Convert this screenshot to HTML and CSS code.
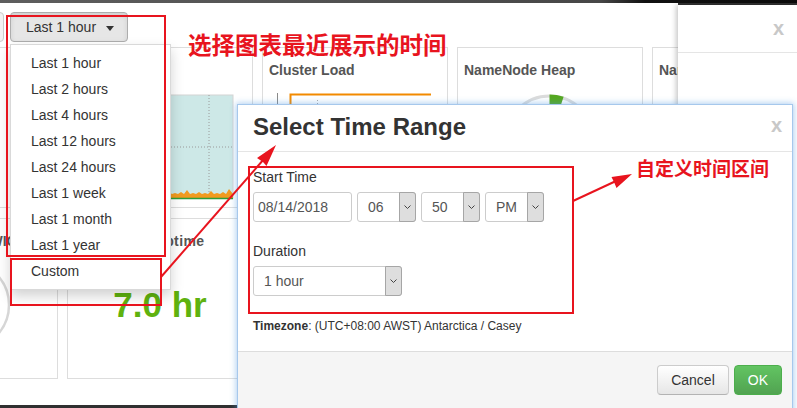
FILE: index.html
```html
<!DOCTYPE html>
<html>
<head>
<meta charset="utf-8">
<title>Select Time Range</title>
<link rel="stylesheet" href="styles.css">
</head>
<body>
<div class="topbar"></div>
<div class="page">
  <div class="toolbar">
    <button class="btn btn-ghost">Today</button>
    <div class="dropdown">
      <button class="btn btn-active">Last 1 hour<span class="caret"></span></button>
      <ul class="dropdown-menu">
        <li>Last 1 hour</li>
        <li>Last 2 hours</li>
        <li>Last 4 hours</li>
        <li>Last 12 hours</li>
        <li>Last 24 hours</li>
        <li>Last 1 week</li>
        <li>Last 1 month</li>
        <li>Last 1 year</li>
        <li>Custom</li>
      </ul>
    </div>
  </div>
  <div class="grid">
    <div class="widget"><div class="w-title">Memory Usage</div></div>
    <div class="widget">
      <div class="w-title">CPU Usage</div>
      <svg class="chart" width="172" height="112" viewBox="0 0 172 112">
        <rect x="16" y="7" width="143" height="103" fill="#cde8e7" stroke="#d4d4d4" stroke-width="1"/>
        <line x1="135" y1="7" x2="135" y2="110" stroke="#9a9a9a" stroke-width="1" stroke-dasharray="1,2"/>
        <line x1="16" y1="59" x2="159" y2="59" stroke="#9a9a9a" stroke-width="1" stroke-dasharray="1,2"/>
        <path d="M16,110 L16,106 L19,105 L21,107 L24,104 L27,106 L30,105 L33,106 L36,103 L38,106 L41,105 L44,106 L47,104 L50,106 L53,105 L56,106 L59,104 L62,106 L65,105 L68,106 L71,104 L74,106 L77,105 L80,106 L83,103 L86,106 L89,105 L92,106 L95,104 L98,106 L101,105 L104,106 L107,104 L110,106 L113,102 L116,106 L119,105 L122,106 L125,104 L128,106 L131,105 L134,106 L137,103 L140,106 L143,105 L146,106 L149,104 L152,106 L155,101 L159,106 L159,110 Z" fill="#f29a1f"/>
        <line x1="16" y1="110.5" x2="159" y2="110.5" stroke="#2e9d3a" stroke-width="1.5"/>
      </svg>
    </div>
    <div class="widget">
      <div class="w-title">Cluster Load</div>
      <svg class="chart" width="172" height="112" viewBox="0 0 172 112">
        <line x1="8.5" y1="5" x2="8.5" y2="110" stroke="#8a8a8a" stroke-width="1"/>
        <line x1="48.5" y1="12" x2="48.5" y2="110" stroke="#aaa" stroke-width="1" stroke-dasharray="1,2"/>
        <path d="M21.5,110 L21.5,6.5 L162,6.5" fill="none" stroke="#f28a00" stroke-width="2"/>
      </svg>
    </div>
    <div class="widget">
      <div class="w-title">NameNode Heap</div>
      <svg class="chart" width="172" height="112" viewBox="0 0 172 112">
        <circle cx="85.5" cy="52" r="44" fill="none" stroke="#dcdcdc" stroke-width="3"/>
        <path d="M85.5,52 L85.5,6.5 A45.5,45.5 0 0 1 99.6,8.7 Z" fill="#55a820"/>
      </svg>
    </div>
    <div class="widget"><div class="w-title">NameNode RPC</div></div>
    <div class="widget">
      <div class="w-title">NameNode CPU WIO</div>
      <svg class="chart" width="172" height="112" viewBox="0 0 172 112">
        <circle cx="86" cy="46" r="44" fill="none" stroke="#d6d6d6" stroke-width="2.5"/>
      </svg>
    </div>
    <div class="widget">
      <div class="w-title w-title-wide">NameNode Uptime</div>
      <div class="big">7.0 hr</div>
    </div>
    <div class="widget"><div class="w-title">HBase Master Heap</div></div>
    <div class="widget"><div class="w-title">HBase Links</div></div>
    <div class="widget"><div class="w-title">HBase Ave Load</div></div>
  </div>
</div>

<div class="side-panel">
  <div class="side-header"><span class="close">x</span></div>
</div>

<div class="modal">
  <div class="modal-header">
    <span class="close close-modal">x</span>
    <h3>Select Time Range</h3>
  </div>
  <div class="modal-body">
    <div class="group group-start">
      <div class="label">Start Time</div>
      <div class="row">
        <div class="input date">08/14/2018</div>
        <div class="select"><span class="val">06</span><span class="arrow"><svg width="7" height="4" viewBox="0 0 7 4"><path d="M0.5,0.5 L3.5,3.5 L6.5,0.5" fill="none" stroke="#444" stroke-width="1"/></svg></span></div>
        <div class="select"><span class="val">50</span><span class="arrow"><svg width="7" height="4" viewBox="0 0 7 4"><path d="M0.5,0.5 L3.5,3.5 L6.5,0.5" fill="none" stroke="#444" stroke-width="1"/></svg></span></div>
        <div class="select"><span class="val">PM</span><span class="arrow"><svg width="7" height="4" viewBox="0 0 7 4"><path d="M0.5,0.5 L3.5,3.5 L6.5,0.5" fill="none" stroke="#444" stroke-width="1"/></svg></span></div>
      </div>
    </div>
    <div class="group">
      <div class="label">Duration</div>
      <div class="select select-wide"><span class="val">1 hour</span><span class="arrow"><svg width="7" height="4" viewBox="0 0 7 4"><path d="M0.5,0.5 L3.5,3.5 L6.5,0.5" fill="none" stroke="#444" stroke-width="1"/></svg></span></div>
    </div>
    <div class="tz"><b>Timezone</b>: (UTC+08:00 AWST) Antarctica / Casey</div>
  </div>
  <div class="modal-footer">
    <button class="btn btn-cancel">Cancel</button>
    <button class="btn btn-ok">OK</button>
  </div>
</div>

<svg class="annot" width="797" height="408" viewBox="0 0 797 408">
  <g fill="none" stroke="#e8141e" stroke-width="2">
    <rect x="7" y="16" width="158" height="240"/>
    <rect x="11" y="259" width="150" height="46"/>
    <rect x="249" y="167" width="324" height="146"/>
    <line x1="161" y1="277" x2="264" y2="159"/>
    <line x1="573" y1="201" x2="616" y2="181"/>
  </g>
  <g fill="#e8141e">
    <polygon points="276,145 266.5,166 263,162 257,158"/>
    <polygon points="632,174 616.5,188 614,182 611.5,177"/>
  </g>
</svg>
<div class="note note-1">选择图表最近展示的时间</div>
<div class="note note-2">自定义时间区间</div>
</body>
</html>
```

FILE: styles.css
```css
* { box-sizing: border-box; }

html, body {
  margin: 0;
  padding: 0;
}

body {
  width: 797px;
  height: 408px;
  overflow: hidden;
  position: relative;
  background: #303030;
  font-family: "Liberation Sans", Arial, sans-serif;
  font-size: 14px;
  color: #333;
}

.topbar {
  height: 3px;
  background: linear-gradient(90deg, #5e5e5e 0, #474747 600px, #111 645px, #0b0b0b 100%);
}

.page {
  width: 678px;
  height: 402px;
  background: #fff;
  overflow: hidden;
  padding-top: 9px;
}

.toolbar {
  display: flex;
  gap: 6px;
  height: 30px;
  margin-left: -56px;
}

.btn {
  font-family: "Liberation Sans", Arial, sans-serif;
  font-size: 14px;
  line-height: 20px;
  height: 30px;
  padding: 4px 12px;
  border: 1px solid #ccc;
  border-radius: 4px;
  background: #fff;
  color: #333;
  white-space: nowrap;
}

.btn-ghost {
  width: 60px;
  background: #f2f2f2;
}

.dropdown {
  position: relative;
}

.btn-active {
  width: 118px;
  text-align: left;
  padding-left: 15px;
  background: #e6e6e6;
  border-color: #adadad;
  box-shadow: inset 0 3px 5px rgba(0, 0, 0, 0.1);
}

.caret {
  display: inline-block;
  width: 0;
  height: 0;
  margin-left: 10px;
  vertical-align: middle;
  border-top: 5px solid #333;
  border-left: 4px solid transparent;
  border-right: 4px solid transparent;
}

.dropdown-menu {
  position: absolute;
  top: 32px;
  left: 0;
  width: 161px;
  margin: 0;
  padding: 5px 0;
  list-style: none;
  background: #fff;
  border: 1px solid rgba(0, 0, 0, 0.15);
  box-shadow: 0 6px 12px rgba(0, 0, 0, 0.18);
  z-index: 5;
}

.dropdown-menu li {
  padding: 3px 20px;
  line-height: 20px;
  font-size: 14px;
  color: #333;
  white-space: nowrap;
}

.grid {
  display: grid;
  grid-template-columns: repeat(5, 186px);
  grid-auto-rows: 161px;
  column-gap: 9px;
  row-gap: 10px;
  margin: 5px 0 0 -128px;
}

.widget {
  border: 1px solid #ddd;
  padding: 12px 6px;
  background: #fff;
  overflow: hidden;
}

.w-title {
  font-weight: bold;
  font-size: 14px;
  line-height: 20px;
  color: #555;
  white-space: nowrap;
}

.w-title-wide {
  letter-spacing: 0.4px;
}

.chart {
  display: block;
  margin-top: 8px;
  overflow: visible;
}

.big {
  margin-top: 34px;
  font-size: 35px;
  line-height: 40px;
  font-weight: bold;
  color: #5fb20f;
  text-align: center;
}

.side-panel {
  position: absolute;
  left: 678px;
  top: 5px;
  right: 0;
  bottom: 0;
  background: #fff;
  box-shadow: -2px 0 5px rgba(0, 0, 0, 0.22);
  z-index: 2;
}

.side-header {
  height: 48px;
  padding-top: 13px;
  padding-right: 13px;
  border-bottom: 1px solid #e5e5e5;
}

.close {
  float: right;
  font-size: 20px;
  line-height: 20px;
  font-weight: bold;
  color: #c8c8c8;
}

.modal {
  position: absolute;
  left: 237px;
  top: 104px;
  width: 556px;
  height: 320px;
  background: #fff;
  border: 1px solid #a6c8ec;
  box-shadow: 0 0 6px 1px rgba(82, 150, 225, 0.45);
  z-index: 3;
}

.modal-header {
  padding: 7px 10px 9px 15px;
  border-bottom: 1px solid #e5e5e5;
}

.modal-header h3 {
  margin: 0;
  font-size: 24px;
  line-height: 30px;
  font-weight: bold;
  color: #333;
}

.close-modal {
  margin-top: 3px;
}

.modal-body {
  padding: 15px 15px 16px 15px;
}

.label {
  font-size: 14px;
  line-height: 20px;
  color: #333;
  margin-bottom: 5px;
}

.group-start {
  margin-bottom: 19px;
}

.row {
  display: flex;
  gap: 5px;
}

.input {
  height: 30px;
  border: 1px solid #ccc;
  border-radius: 3px;
  padding: 0 4px;
  line-height: 28px;
  font-size: 14px;
  color: #555;
}

.date {
  width: 99px;
}

.select {
  display: flex;
  width: 59px;
  height: 30px;
  border: 1px solid #ccc;
  border-radius: 3px;
  font-size: 14px;
  color: #555;
}

.select .val {
  flex: 1;
  padding-left: 10px;
  line-height: 28px;
  white-space: nowrap;
}

.select .arrow {
  width: 17px;
  margin: -1px -1px -1px 0;
  background: #dedede;
  border: 1px solid #a6a6a6;
  border-radius: 0 3px 3px 0;
  display: flex;
  align-items: center;
  justify-content: center;
}

.select-wide {
  width: 149px;
}

.tz {
  margin-top: 21px;
  font-size: 12px;
  line-height: 18px;
  color: #333;
}

.modal-footer {
  display: flex;
  justify-content: flex-end;
  gap: 5px;
  padding: 13px 10px 30px 15px;
  background: #f5f5f5;
  border-top: 1px solid #ddd;
}

.btn-cancel {
  padding: 4px 13px;
  background: linear-gradient(#ffffff, #e6e6e6);
  border-color: #ccc #ccc #b3b3b3;
}

.btn-ok {
  padding: 4px 13px;
  color: #fff;
  background: linear-gradient(#62c462, #51a351);
  border-color: #4cae4c;
}

.annot {
  position: absolute;
  left: 0;
  top: 0;
  z-index: 10;
}

.note {
  position: absolute;
  z-index: 11;
  font-family: "Noto Sans CJK SC", sans-serif;
  font-weight: bold;
  color: #e8141e;
  line-height: 1;
  white-space: nowrap;
}

.note-1 {
  left: 188px;
  top: 33px;
  font-size: 23.5px;
}

.note-2 {
  left: 636px;
  top: 158px;
  font-size: 19px;
}
```
